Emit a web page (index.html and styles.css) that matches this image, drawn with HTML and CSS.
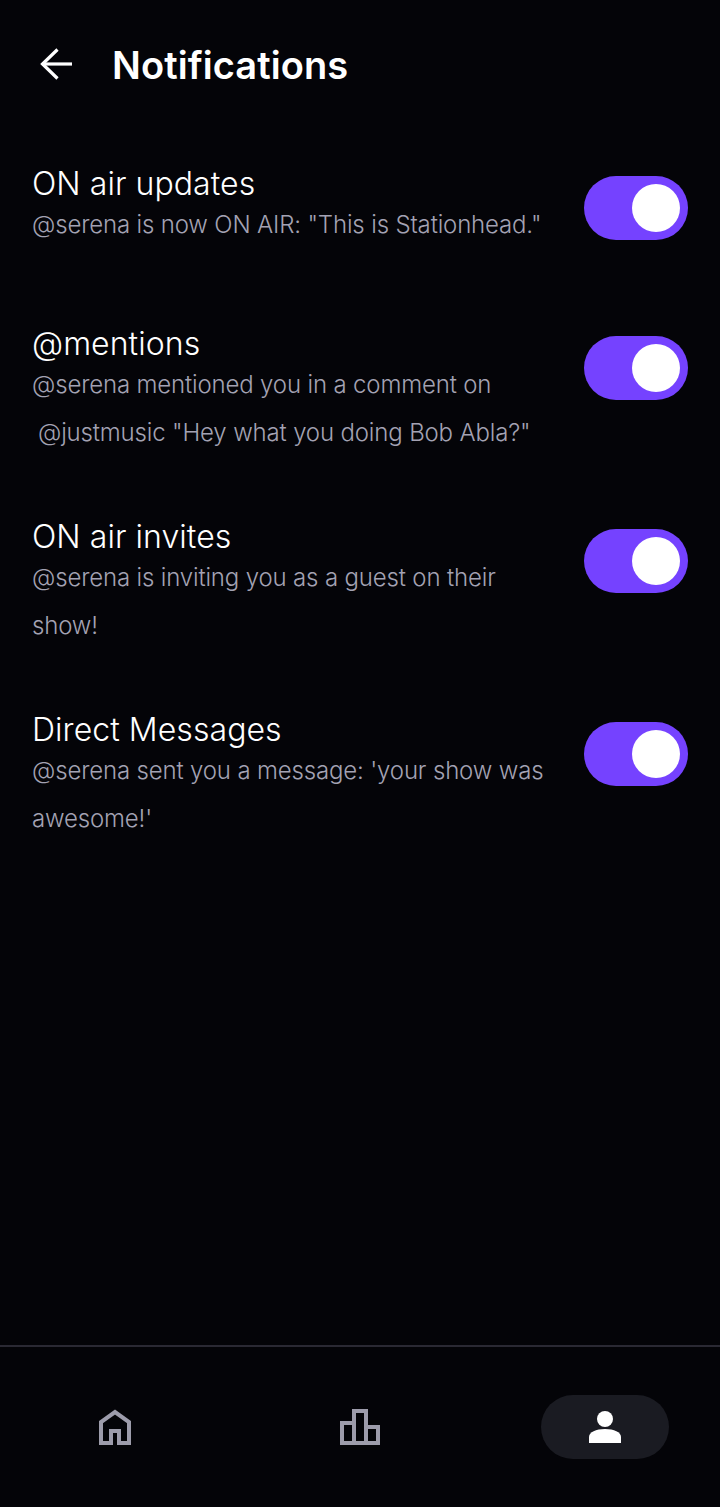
FILE: index.html
```html
<!DOCTYPE html>
<html lang="en">
<head>
    <meta charset="UTF-8">
    <meta name="viewport" content="width=device-width, initial-scale=1.0">
    <title>Notifications</title>
    <link rel="stylesheet" href="styles.css">
</head>
<body>
    <div class="screen">
        <!-- Header -->
        <header class="header">
            <svg class="back-icon" width="36" height="36" viewBox="0 0 36 36" fill="none" stroke="#fff" stroke-width="3.2">
                <path d="M34 17H4"/>
                <path d="M19.5 2.5L4.5 17L19.5 31.5"/>
            </svg>
            <h1 class="title">Notifications</h1>
        </header>

        <!-- Settings list -->
        <main class="list">
            <div class="row row-short">
                <div class="row-text">
                    <div class="row-title">ON air updates</div>
                    <div class="row-sub">@serena is now ON AIR: "This is Stationhead."</div>
                </div>
                <div class="toggle"><span class="knob"></span></div>
            </div>
            <div class="row">
                <div class="row-text">
                    <div class="row-title">@mentions</div>
                    <div class="row-sub">@serena mentioned you in a comment on<br><span class="indent">@justmusic "Hey what you doing Bob Abla?"</span></div>
                </div>
                <div class="toggle"><span class="knob"></span></div>
            </div>
            <div class="row">
                <div class="row-text">
                    <div class="row-title">ON air invites</div>
                    <div class="row-sub">@serena is inviting you as a guest on their show!</div>
                </div>
                <div class="toggle"><span class="knob"></span></div>
            </div>
            <div class="row">
                <div class="row-text">
                    <div class="row-title">Direct Messages</div>
                    <div class="row-sub">@serena sent you a message: 'your show was awesome!'</div>
                </div>
                <div class="toggle"><span class="knob"></span></div>
            </div>
        </main>

        <!-- Bottom nav -->
        <nav class="nav">
            <div class="nav-item">
                <svg width="32" height="36" viewBox="0 0 32 36" fill="none" stroke="#9d9cab" stroke-width="4">
                    <path d="M2 34V13L16 3L30 13V34H20V22H12V34Z"/>
                </svg>
            </div>
            <div class="nav-item">
                <svg width="40" height="36" viewBox="0 0 40 36" fill="none" stroke="#9d9cab" stroke-width="4">
                    <path d="M2 34V14H14V34Z"/>
                    <path d="M14 34V2H26V34Z"/>
                    <path d="M26 34V18H38V34Z"/>
                </svg>
            </div>
            <div class="nav-item active">
                <svg width="32" height="32" viewBox="0 0 32 32" fill="#fff">
                    <circle cx="16" cy="8" r="8"/>
                    <path d="M0 32V26C0 21 7 18 16 18C25 18 32 21 32 26V32Z"/>
                </svg>
            </div>
        </nav>
    </div>
</body>
</html>
```

FILE: styles.css
```css
/* Basic Styling */
body {
    margin: 0;
    background-color: #040408;
    color: #fff;
    font-family: Inter, "Liberation Sans", sans-serif;
}

.screen {
    display: flex;
    flex-direction: column;
    height: 1507px;
    overflow: hidden;
}

/* Header */
.header {
    display: flex;
    align-items: center;
    height: 130px;
    padding-left: 38px;
}

.back-icon {
    margin-right: 38px;
}

.title {
    margin: 0;
    font-size: 38px;
    font-weight: 600;
    line-height: 46px;
    letter-spacing: 0.08px;
}

/* Rows */
.list {
    flex: 1;
    display: flex;
    flex-direction: column;
    gap: 60px;
    padding: 34px 32px 0;
}

.row {
    display: flex;
    justify-content: space-between;
    align-items: flex-start;
}

.row-short {
    min-height: 100px;
}

.row-text {
    width: 520px;
}

.row-title {
    font-size: 32px;
    font-weight: 300;
    line-height: 40px;
    letter-spacing: 0.06px;
}

.row-sub {
    margin-top: -3px;
    font-size: 24px;
    font-weight: 300;
    line-height: 48px;
    letter-spacing: -0.16px;
    color: #a3a2b3;
}

.indent {
    margin-left: 6px;
}

.toggle {
    display: flex;
    justify-content: flex-end;
    align-items: center;
    flex-shrink: 0;
    box-sizing: border-box;
    width: 104px;
    height: 64px;
    margin-top: 12px;
    padding-right: 8px;
    border-radius: 32px;
    background-color: #7542ff;
}

.knob {
    width: 48px;
    height: 48px;
    border-radius: 50%;
    background-color: #fff;
}

/* Bottom nav */
.nav {
    display: flex;
    justify-content: space-between;
    align-items: center;
    flex-shrink: 0;
    height: 162px;
    padding: 0 51px;
    border-top: 2px solid #2a2933;
    box-sizing: border-box;
}

.nav-item {
    display: flex;
    justify-content: center;
    align-items: center;
    width: 128px;
    height: 64px;
    border-radius: 32px;
}

.nav-item.active {
    background-color: #1a1b22;
}
```
